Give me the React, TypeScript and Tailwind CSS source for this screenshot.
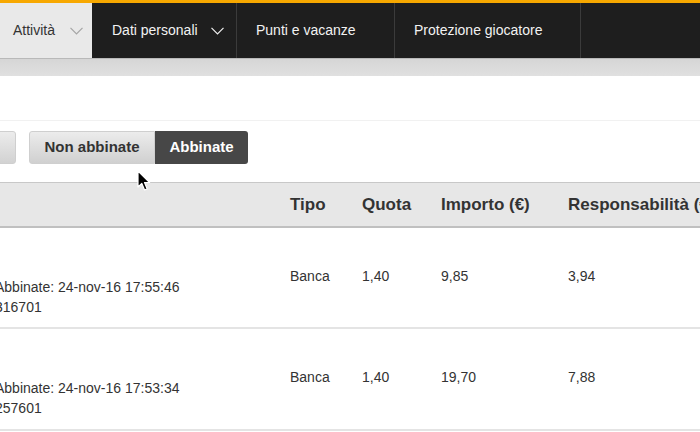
import React from "react";

function Chevron({ className }: { className: string }) {
  return (
    <svg width="13" height="8" viewBox="0 0 13 8" className={className} fill="none">
      <path d="M0.5 0.8 L6.5 6.8 L12.5 0.8" stroke="currentColor" strokeWidth="1.2" />
    </svg>
  );
}

function Cursor() {
  return (
    <svg
      width="14"
      height="22"
      viewBox="0 0 14 22"
      className="absolute left-[137px] top-[170px]"
    >
      <path
        d="M1 1 L1 17 L4.8 13.4 L7.6 20 L10.2 18.9 L7.5 12.5 L12.6 12.5 Z"
        fill="#000"
        stroke="#fff"
        strokeWidth="1.2"
        strokeLinejoin="round"
      />
    </svg>
  );
}

interface Bet {
  matched: string;
  id: string;
  tipo: string;
  quota: string;
  importo: string;
  resp: string;
}

const bets: Bet[] = [
  { matched: "Abbinate: 24-nov-16 17:55:46", id: "316701", tipo: "Banca", quota: "1,40", importo: "9,85", resp: "3,94" },
  { matched: "Abbinate: 24-nov-16 17:53:34", id: "257601", tipo: "Banca", quota: "1,40", importo: "19,70", resp: "7,88" },
];

export default function App() {
  return (
    <div className="relative w-[700px] h-[432px] overflow-hidden bg-white font-['Liberation_Sans',Arial,sans-serif] text-[#333]">
      {/* top accent */}
      <div className="h-[3px] bg-[#f7a800]" />

      {/* nav */}
      <nav className="flex h-[55px] bg-[#1e1e1e] text-[14px] whitespace-nowrap">
        <div className="flex w-[92px] shrink-0 items-center bg-[#e9e9e9] pl-[13px] text-[#333]">
          Attività
          <Chevron className="ml-[15px] text-[#a5a5a5]" />
        </div>
        <div className="flex w-[145px] shrink-0 items-center border-r border-[#3b3b3b] pl-[20px] text-[#f2f2f2]">
          Dati personali
          <Chevron className="ml-[13px] text-[#eeeeee]" />
        </div>
        <div className="flex w-[158px] shrink-0 items-center border-r border-[#3b3b3b] pl-[19px] text-[#f2f2f2]">
          Punti e vacanze
        </div>
        <div className="flex w-[186px] shrink-0 items-center border-r border-[#3b3b3b] pl-[19px] text-[#f2f2f2]">
          Protezione giocatore
        </div>
        <div className="flex-1" />
      </nav>
      <div className="h-[18px] border-t border-[#b9b9b9] bg-gradient-to-b from-[#d6d6d6] to-[#e0e0e0]" />
      <div className="h-[45px] border-b border-[#f1f1f1]" />

      {/* filter buttons */}
      <div className="flex h-[33px] mt-[10px] text-[15px] font-bold">
        <div className="-ml-[20px] flex w-[36px] items-center justify-end rounded-[3px] border border-[#cfcfcf] bg-gradient-to-b from-[#ececec] to-[#d2d2d2] pr-[16px] text-[#9a9a9a] overflow-hidden">
          e
        </div>
        <div className="ml-[13px] flex">
          <div className="flex w-[126px] items-center justify-center rounded-l-[3px] border border-[#cfcfcf] bg-gradient-to-b from-[#ececec] to-[#d0d0d0] text-[#333]">
            Non abbinate
          </div>
          <div className="flex w-[93px] items-center justify-center rounded-r-[3px] bg-[#474747] text-white">
            Abbinate
          </div>
        </div>
      </div>

      {/* table */}
      <div className="mt-[18px]">
        <div className="flex h-[46px] items-center border-t border-b-2 border-t-[#c8c8c8] border-b-[#c0c0c0] bg-[#e7e7e7] text-[17px] font-bold whitespace-nowrap">
          <div className="w-[290px] shrink-0" />
          <div className="w-[72px] shrink-0">Tipo</div>
          <div className="w-[79px] shrink-0">Quota</div>
          <div className="w-[127px] shrink-0">Importo (€)</div>
          <div className="shrink-0">Responsabilità (€)</div>
        </div>
        {bets.map((b, i) => (
          <div
            key={b.id}
            className={`flex border-b-2 border-[#e4e4e4] text-[14px] leading-[20px] whitespace-nowrap ${i === 1 ? "h-[102px]" : "h-[101px]"}`}
          >
            <div className="w-[290px] shrink-0 pt-[49px]">
              <div className="-ml-[5px]">{b.matched}</div>
              <div className="-ml-[5px]">{b.id}</div>
            </div>
            <div className="w-[72px] shrink-0 pt-[38px]">{b.tipo}</div>
            <div className="w-[79px] shrink-0 pt-[38px]">{b.quota}</div>
            <div className="w-[127px] shrink-0 pt-[38px]">{b.importo}</div>
            <div className="shrink-0 pt-[38px]">{b.resp}</div>
          </div>
        ))}
      </div>

      <Cursor />
    </div>
  );
}
